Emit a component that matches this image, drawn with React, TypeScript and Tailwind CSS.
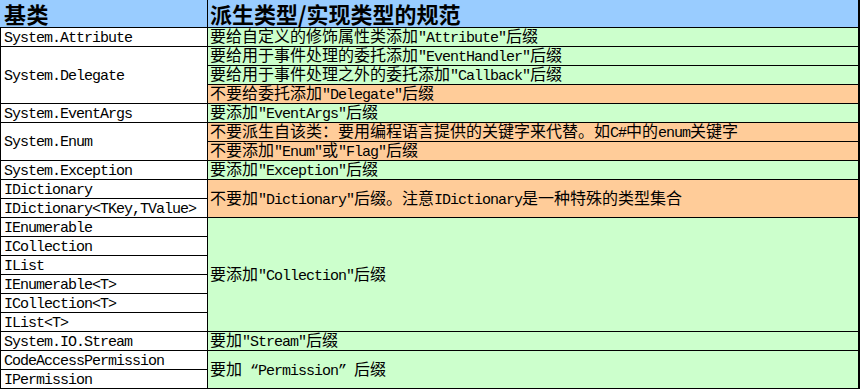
import React from "react";

const CJK = /([\u2E80-\u9FFF\u3000-\u303F\uFF00-\uFFEF]+)/;

// SimSun-ish mix: full-width CJK at 16px, half-width Latin at 8px advance
function Txt({ s }: { s: string }) {
  const parts = s.split(CJK).filter(Boolean);
  return (
    <span className="whitespace-pre leading-[18px]">
      {parts.map((p, i) =>
        CJK.test(p) ? (
          <span key={i} className="font-['Noto_Sans_CJK_SC',sans-serif] text-[16px] leading-[18px]">
            {p}
          </span>
        ) : (
          <span
            key={i}
            className="font-['Liberation_Mono','Noto_Sans_CJK_SC',monospace] text-[15px] leading-[18px] tracking-[-1px]"
          >
            {p}
          </span>
        )
      )}
    </span>
  );
}

type Cell = { text: string; span?: number; bg?: "green" | "orange" };

const left: Cell[] = [
  { text: "System.Attribute" },
  { text: "System.Delegate", span: 3 },
  { text: "System.EventArgs" },
  { text: "System.Enum", span: 2 },
  { text: "System.Exception" },
  { text: "IDictionary" },
  { text: "IDictionary<TKey,TValue>" },
  { text: "IEnumerable" },
  { text: "ICollection" },
  { text: "IList" },
  { text: "IEnumerable<T>" },
  { text: "ICollection<T>" },
  { text: "IList<T>" },
  { text: "System.IO.Stream" },
  { text: "CodeAccessPermission" },
  { text: "IPermission" },
];

const right: Cell[] = [
  { text: '要给自定义的修饰属性类添加"Attribute"后缀', bg: "green" },
  { text: '要给用于事件处理的委托添加"EventHandler"后缀', bg: "green" },
  { text: '要给用于事件处理之外的委托添加"Callback"后缀', bg: "green" },
  { text: '不要给委托添加"Delegate"后缀', bg: "orange" },
  { text: '要添加"EventArgs"后缀', bg: "green" },
  { text: "不要派生自该类：要用编程语言提供的关键字来代替。如C#中的enum关键字", bg: "orange" },
  { text: '不要添加"Enum"或"Flag"后缀', bg: "orange" },
  { text: '要添加"Exception"后缀', bg: "green" },
  { text: '不要加"Dictionary"后缀。注意IDictionary是一种特殊的类型集合', span: 2, bg: "orange" },
  { text: '要添加"Collection"后缀', span: 6, bg: "green" },
  { text: '要加"Stream"后缀', bg: "green" },
  { text: "要加 “Permission” 后缀", span: 2, bg: "green" },
];

const spanCls: Record<number, string> = {
  1: "row-span-1",
  2: "row-span-2",
  3: "row-span-3",
  6: "row-span-6",
};

export default function App() {
  let lr = 2;
  let rr = 2;
  return (
    <div className="min-h-screen bg-white">
      <div className="grid w-[860px] grid-cols-[206px_650px] grid-rows-[27px_repeat(19,18px)] gap-px bg-black pb-px pl-px pr-[2px] text-black">
        <div className="col-start-1 row-start-1 -ml-px flex items-center bg-[#99ccff] pl-[4px] font-['Noto_Sans_CJK_SC',sans-serif] text-[22px] font-bold leading-[27px] tracking-[0.5px]">
          基类
        </div>
        <div className="col-start-2 row-start-1 flex items-center bg-[#99ccff] pl-[2px] font-['Noto_Sans_CJK_SC',sans-serif] text-[22px] font-bold leading-[27px]">
          派生类型/实现类型的规范
        </div>
        {left.map((c, i) => {
          const span = c.span ?? 1;
          const start = lr;
          lr += span;
          return (
            <div
              key={"l" + i}
              className={`col-start-1 ${spanCls[span]} flex items-center bg-white pl-[3px]`}
              style={{ gridRowStart: start }}
            >
              <Txt s={c.text} />
            </div>
          );
        })}
        {right.map((c, i) => {
          const span = c.span ?? 1;
          const start = rr;
          rr += span;
          return (
            <div
              key={"r" + i}
              className={`col-start-2 ${spanCls[span]} flex items-center pl-[2px] ${
                c.bg === "orange" ? "bg-[#ffcc99]" : "bg-[#ccffcc]"
              }`}
              style={{ gridRowStart: start }}
            >
              <Txt s={c.text} />
            </div>
          );
        })}
      </div>
    </div>
  );
}
